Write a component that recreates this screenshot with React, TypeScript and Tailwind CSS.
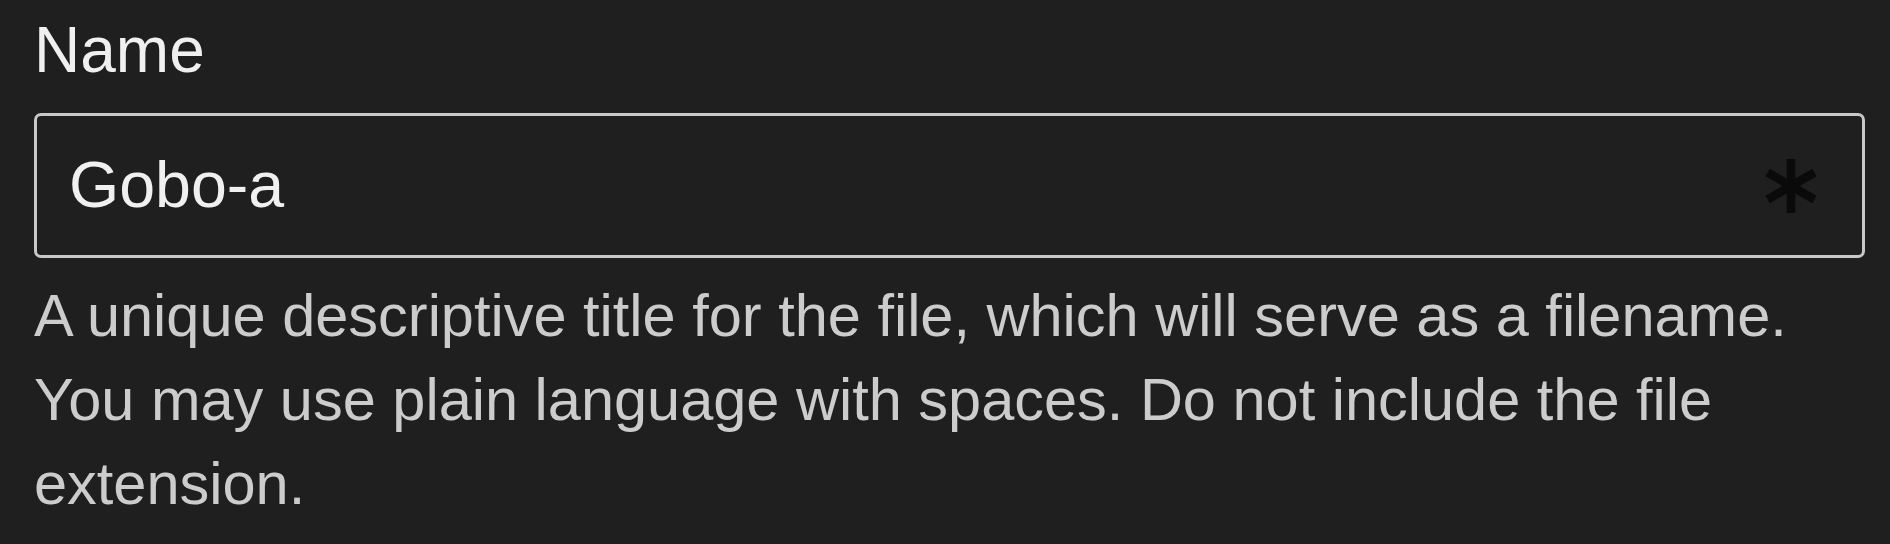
import React from "react";

export default function App() {
  return (
    <div className="w-[1890px] h-[544px] bg-[#1f1f1f] overflow-hidden" style={{ fontFamily: '"Liberation Sans", Arial, sans-serif' }}>
      <div className="ml-[34px] w-[1831px] flex flex-col">
        <label className="text-[64px] leading-[100px] text-[#f0f0f0]">Name</label>
        <div className="mt-[13px] h-[145px] border-[3px] border-[#c8c8c8] rounded-[7px] flex items-center pl-[32px] pr-[43px]">
          <span className="flex-1 text-[64.5px] leading-none text-[#f0f0f0]">Gobo-a</span>
          <svg width="56" height="56" viewBox="0 0 56 56" className="shrink-0">
            <g stroke="#0a0a0a" strokeWidth="8.6" strokeLinecap="butt">
              <line x1="28" y1="1" x2="28" y2="55" />
              <line x1="4.6" y1="14.5" x2="51.4" y2="41.5" />
              <line x1="4.6" y1="41.5" x2="51.4" y2="14.5" />
            </g>
          </svg>
        </div>
        <p className="mt-[16px] text-[59.5px] leading-[84px] text-[#cccccc]">
          A unique descriptive title for the file, which will serve as a filename. You may use plain language with spaces. Do not include the file extension.
        </p>
      </div>
    </div>
  );
}
